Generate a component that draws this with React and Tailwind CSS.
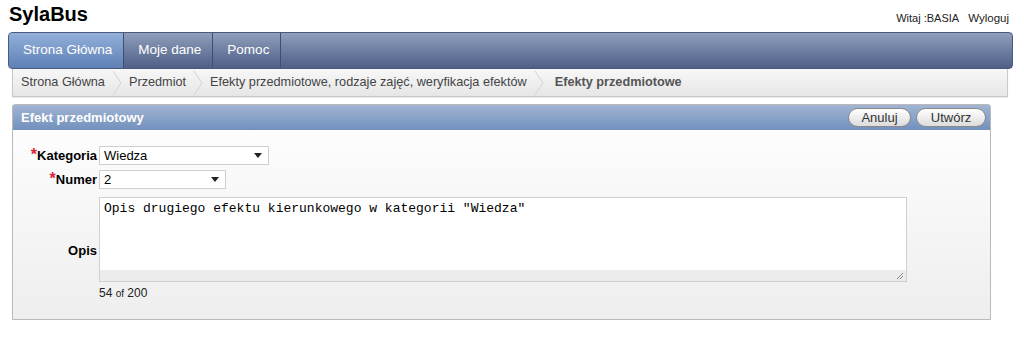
import React from "react";

const tabs = ["Strona Główna", "Moje dane", "Pomoc"];
const crumbs = [
  "Strona Główna",
  "Przedmiot",
  "Efekty przedmiotowe, rodzaje zajęć, weryfikacja efektów",
];

function Chevron() {
  return (
    <svg width="12" height="26" viewBox="0 0 12 26" className="mx-[6px] shrink-0">
      <polyline points="2,1 10,13 2,25" fill="none" stroke="#d2d2d2" strokeWidth="1" />
    </svg>
  );
}

function Caret() {
  return (
    <svg width="8" height="5" viewBox="0 0 8 5">
      <polygon points="0,0 8,0 4,5" fill="#222" />
    </svg>
  );
}

function Select({ value, width }) {
  return (
    <div
      className={`flex items-center justify-between h-[19px] border border-[#cfcfcf] bg-white pl-[4px] pr-[6px] text-[13px] text-black leading-none ${width}`}
    >
      <span>{value}</span>
      <Caret />
    </div>
  );
}

function Label({ children, required }) {
  return (
    <div className="h-[19px] flex items-center justify-end text-[13px] font-bold text-black leading-none">
      {required && <span className="text-[#d8263a] text-[16px] leading-none -mt-[2px]">*</span>}
      {children}
    </div>
  );
}

export default function App() {
  return (
    <div className="w-[1024px] h-[348px] bg-white font-['Liberation_Sans',Arial,sans-serif] text-[#222]">
      {/* top line */}
      <div className="flex items-start justify-between h-[32px]">
        <h1 className="pl-[9px] pt-[2px] text-[20px] leading-[24px] font-bold text-black">SylaBus</h1>
        <div className="flex items-baseline gap-[9px] pt-[10px] pr-[15px] text-[11px] text-[#222]">
          <span>Witaj :BASIA</span>
          <span className="text-[11.5px]">Wyloguj</span>
        </div>
      </div>

      {/* nav */}
      <div className="ml-[8px] mr-[11px] h-[37px] flex rounded-[4px] border border-[#4a5a7e] bg-gradient-to-b from-[#909fbb] to-[#4f5f87] overflow-hidden">
        {tabs.map((t, i) => (
          <div
            key={t}
            className={`flex items-center pl-[14px] pr-[11px] text-[13.5px] text-white border-r border-[#3f4d70] ${
              i === 0 ? "bg-gradient-to-b from-[#93b0d9] to-[#5e80b6]" : ""
            }`}
          >
            {t}
          </div>
        ))}
      </div>

      {/* breadcrumb */}
      <div className="ml-[12px] mr-[16px] h-[28px] flex items-center pl-[8px] border border-t-0 border-[#c9c9c9] bg-gradient-to-b from-[#f7f7f7] to-[#e6e6e6] text-[12.7px] text-[#444] shadow-[0_1px_1px_rgba(0,0,0,0.08)]">
        {crumbs.map((c) => (
          <React.Fragment key={c}>
            <span>{c}</span>
            <Chevron />
          </React.Fragment>
        ))}
        <span className="font-bold text-[#555] ml-[4px]">Efekty przedmiotowe</span>
      </div>

      {/* panel */}
      <div className="ml-[12px] mr-[33px] mt-[7px] border border-[#b9b9b9] rounded-t-[3px] bg-gradient-to-b from-white to-[#eeeeee]">
        <div className="h-[25px] flex items-center justify-between pl-[8px] pr-[4px] bg-gradient-to-b from-[#a2b5d3] to-[#7190bd]">
          <span className="text-[13px] font-bold text-white">Efekt przedmiotowy</span>
          <div className="flex gap-[5px]">
            <button className="h-[19px] w-[63px] rounded-full border border-[#8a8a8a] bg-gradient-to-b from-white to-[#dcdcdc] text-[13px] leading-none text-[#333]">
              Anuluj
            </button>
            <button className="h-[19px] w-[70px] rounded-full border border-[#8a8a8a] bg-gradient-to-b from-white to-[#dcdcdc] text-[13px] leading-none text-[#333]">
              Utwórz
            </button>
          </div>
        </div>

        <div className="pt-[16px] pb-[17px]">
          <div className="grid grid-cols-[84px_1fr] gap-x-[2px]">
            <Label required>Kategoria</Label>
            <Select value="Wiedza" width="w-[170px]" />

            <div className="mt-[5px]">
              <Label required>Numer</Label>
            </div>
            <div className="mt-[5px]">
              <Select value="2" width="w-[127px]" />
            </div>

            <div className="mt-[8px] pt-[44px] text-right text-[13px] font-bold text-black">Opis</div>
            <div className="mt-[8px]">
              <div className="w-[808px] border border-[#d0d0d0] bg-white">
                <div className="h-[72px] px-[4px] pt-[3px] font-['Liberation_Mono','Courier_New',monospace] text-[13px] leading-[16px] text-black">
                  Opis drugiego efektu kierunkowego w kategorii "Wiedza"
                </div>
                <div className="h-[11px] bg-[#ececec] flex justify-end items-end pr-[2px] pb-[1px]">
                  <svg width="8" height="8" viewBox="0 0 8 8">
                    <line x1="1" y1="7" x2="7" y2="1" stroke="#888" />
                    <line x1="4" y1="7" x2="7" y2="4" stroke="#888" />
                  </svg>
                </div>
              </div>
              <div className="mt-[2px] text-[12px] text-[#222]">
                54 <span className="text-[10px]">of</span> 200
              </div>
            </div>
          </div>
        </div>
      </div>
    </div>
  );
}
